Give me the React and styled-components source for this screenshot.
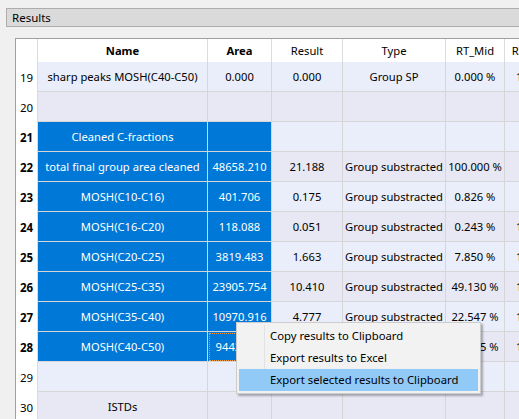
import React from 'react';
import styled, {createGlobalStyle} from 'styled-components';

const GlobalStyle = createGlobalStyle`
  html, body{
    margin: 0;
    padding: 0;
    background: #f0f0f0;
  }
  body{
    font-family: "Noto Sans", "Liberation Sans", sans-serif;
    font-size: 11.2px;
    color: #000;
  }
`

const Page = styled.div`
  position: relative;
  width: 519px;
  height: 419px;
  overflow: hidden;
  background: #f0f0f0;
`

const GroupBar = styled.div`
  margin: 8px 0 0 6px;
  height: 17px;
  line-height: 17px;
  padding-left: 5px;
  font-size: 11.5px;
  background: #dadada;
  border: 1px solid #adadad;
  border-right: none;
`

const Frame = styled.div`
  margin: 11px 0 0 15px;
  width: 560px;
  border-top: 1px solid #a0a0a0;
  border-left: 1px solid #a0a0a0;
  background: #fff;
`

const Grid = styled.div`
  display: grid;
  grid-template-columns: 22px 170px 64px 71px 103px 59px 58px;
`

const HeadCell = styled.div`
  height: 23px;
  box-sizing: border-box;
  display: flex;
  align-items: center;
  justify-content: center;
  background: #fff;
  border-right: 1px solid #dcdcdc;
  font-weight: ${p => p.$bold ? 700 : 400};
  white-space: nowrap;
  overflow: hidden;
`

const RowHead = styled.div`
  height: 30px;
  box-sizing: border-box;
  display: flex;
  align-items: center;
  padding-left: 4px;
  background: #fff;
  border-right: 1px solid #dcdcdc;
  font-size: 11.5px;
  font-weight: ${p => p.$bold ? 700 : 400};
`

const Cell = styled.div`
  height: 30px;
  box-sizing: border-box;
  display: flex;
  align-items: center;
  justify-content: center;
  white-space: nowrap;
  overflow: hidden;
  border-right: 1px solid #d6d6d6;
  border-bottom: 1px solid #d6d6d6;
  background: ${p => p.$selected ? '#0078d7' : (p.$even ? '#e7e8f4' : '#eaeefa')};
  color: ${p => p.$selected ? '#fff' : '#000'};
  outline: ${p => p.$focus ? '1px dotted #f29a3c' : 'none'};
  outline-offset: -2px;
`

const Menu = styled.div`
  position: absolute;
  left: 236px;
  top: 322px;
  width: 243px;
  padding: 2px 0 2px;
  background: #f2f2f2;
  border: 1px solid #cccccc;
  box-shadow: 2px 2px 2px rgba(0,0,0,0.3);
  &::before{
    content: '';
    position: absolute;
    left: 27px;
    top: 2px;
    bottom: 2px;
    width: 1px;
    background: #e2e2e2;
  }
`

const MenuItem = styled.div`
  position: relative;
  height: 22px;
  line-height: 22px;
  margin: 0 2px;
  padding-left: 31px;
  font-size: 11.3px;
  background: ${p => p.$active ? '#91c9f7' : 'transparent'};
`

const columns = [
  {key: 'name', title: 'Name', bold: true},
  {key: 'area', title: 'Area', bold: true},
  {key: 'result', title: 'Result'},
  {key: 'type', title: 'Type'},
  {key: 'mid', title: 'RT_Mid'},
  {key: 'start', title: 'RT_Start'},
]

const GS = 'Group substracted'

const rows = [
  {n: 19, name: 'sharp peaks MOSH(C40-C50)', area: '0.000', result: '0.000', type: 'Group SP', mid: '0.000 %', start: '14.210'},
  {n: 20},
  {n: 21, sel: true, name: 'Cleaned C-fractions'},
  {n: 22, sel: true, name: 'total final group area cleaned', area: '48658.210', result: '21.188', type: GS, mid: '100.000 %'},
  {n: 23, sel: true, name: 'MOSH(C10-C16)', area: '401.706', result: '0.175', type: GS, mid: '0.826 %'},
  {n: 24, sel: true, name: 'MOSH(C16-C20)', area: '118.088', result: '0.051', type: GS, mid: '0.243 %', start: '11.650'},
  {n: 25, sel: true, name: 'MOSH(C20-C25)', area: '3819.483', result: '1.663', type: GS, mid: '7.850 %', start: '13.180'},
  {n: 26, sel: true, name: 'MOSH(C25-C35)', area: '23905.754', result: '10.410', type: GS, mid: '49.130 %', start: '15.020'},
  {n: 27, sel: true, name: 'MOSH(C35-C40)', area: '10970.916', result: '4.777', type: GS, mid: '22.547 %', start: '17.930'},
  {n: 28, sel: true, focus: true, name: 'MOSH(C40-C50)', area: '9442.263', result: '4.112', type: GS, mid: '19.405 %', start: '18.860'},
  {n: 29},
  {n: 30, name: 'ISTDs'},
]

export default function App(){
  return (
    <Page>
      <GlobalStyle />
      <GroupBar>Results</GroupBar>
      <Frame>
        <Grid>
          <HeadCell />
          {columns.map(c => <HeadCell key={c.key} $bold={c.bold}>{c.title}</HeadCell>)}
          {rows.map(r => (
            <React.Fragment key={r.n}>
              <RowHead $bold={r.sel}>{r.n}</RowHead>
              {columns.map(c => {
                const picked = r.sel && (c.key === 'name' || c.key === 'area');
                return (
                  <Cell
                    key={c.key}
                    $selected={picked}
                    $even={r.n % 2 === 0}
                    $focus={r.focus && c.key === 'area'}
                  >
                    {r[c.key] || ''}
                  </Cell>
                )
              })}
            </React.Fragment>
          ))}
        </Grid>
      </Frame>
      <Menu>
        <MenuItem>Copy results to Clipboard</MenuItem>
        <MenuItem>Export results to Excel</MenuItem>
        <MenuItem $active>Export selected results to Clipboard</MenuItem>
      </Menu>
    </Page>
  )
}
